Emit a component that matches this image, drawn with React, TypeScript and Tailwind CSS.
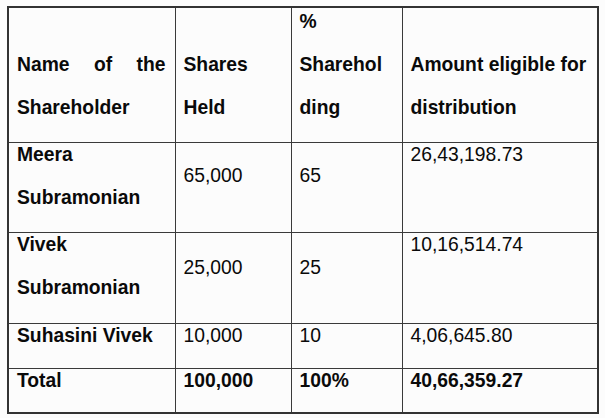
import React from "react";

function L({ children }: { children?: React.ReactNode }) {
  return <div className="h-[43px] leading-[24px] whitespace-nowrap">{children}</div>;
}

const td = "border border-[#3a3a3a] pl-[8px] pr-[6px] py-0";

export default function App() {
  return (
    <div className="w-[605px] h-[418px] bg-[#fcfcfc] pt-[6px] pl-[7px] text-[#0a0a0a] overflow-hidden" style={{ fontFamily: '"Liberation Sans", Arial, sans-serif' }}>
      <table className="table-fixed border-collapse border-2 border-[#333] text-[19.3px]" style={{ width: 590 }}>
        <colgroup>
          <col className="w-[167px]" />
          <col className="w-[116px]" />
          <col className="w-[111px]" />
          <col className="w-[196px]" />
        </colgroup>
        <tbody>
          <tr className="h-[135px] font-bold">
            <td className={`${td} align-bottom pb-[3px]`}>
              <div className="h-[43px] leading-[24px] flex justify-between pr-[3px]">
                <span>Name</span>
                <span>of</span>
                <span>the</span>
              </div>
              <L>Shareholder</L>
            </td>
            <td className={`${td} align-bottom pb-[3px]`}>
              <L>Shares</L>
              <L>Held</L>
            </td>
            <td className={`${td} align-bottom pb-[3px]`}>
              <L>%</L>
              <L>Sharehol</L>
              <L>ding</L>
            </td>
            <td className={`${td} align-bottom pb-[3px]`}>
              <L>Amount eligible for</L>
              <L>distribution</L>
            </td>
          </tr>
          <tr className="h-[90px]">
            <td className={`${td} align-top font-bold`}>
              <L>Meera</L>
              <L>Subramonian</L>
            </td>
            <td className={`${td} align-middle pb-[3px]`}>
              <L>65,000</L>
            </td>
            <td className={`${td} align-middle pb-[3px]`}>
              <L>65</L>
            </td>
            <td className={`${td} align-top`}>
              <L>26,43,198.73</L>
            </td>
          </tr>
          <tr className="h-[91px]">
            <td className={`${td} align-top font-bold`}>
              <L>Vivek</L>
              <L>Subramonian</L>
            </td>
            <td className={`${td} align-middle`}>
              <L>25,000</L>
            </td>
            <td className={`${td} align-middle`}>
              <L>25</L>
            </td>
            <td className={`${td} align-top`}>
              <L>10,16,514.74</L>
            </td>
          </tr>
          <tr className="h-[45px]">
            <td className={`${td} align-top font-bold`}>
              <L>Suhasini Vivek</L>
            </td>
            <td className={`${td} align-top`}>
              <L>10,000</L>
            </td>
            <td className={`${td} align-top`}>
              <L>10</L>
            </td>
            <td className={`${td} align-top`}>
              <L>4,06,645.80</L>
            </td>
          </tr>
          <tr className="h-[45px] font-bold">
            <td className={`${td} align-top`}>
              <L>Total</L>
            </td>
            <td className={`${td} align-top`}>
              <L>100,000</L>
            </td>
            <td className={`${td} align-top`}>
              <L>100%</L>
            </td>
            <td className={`${td} align-top`}>
              <L>40,66,359.27</L>
            </td>
          </tr>
        </tbody>
      </table>
    </div>
  );
}
